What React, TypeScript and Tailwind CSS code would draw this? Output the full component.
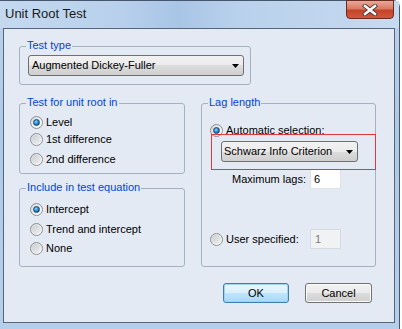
import React from "react";

function Radio({ checked }: { checked?: boolean }) {
  return (
    <div className="w-[13px] h-[13px] shrink-0 rounded-full border border-[#8e8f8f] bg-[linear-gradient(135deg,#d5d7da,#f6f6f6_70%,#ffffff)] flex items-center justify-center">
      {checked ? (
        <div className="w-[7px] h-[7px] rounded-full bg-[radial-gradient(circle_at_40%_35%,#8ad8ff,#1f7fc4_55%,#0b3b6a)] border border-[#174a78]" />
      ) : (
        <div className="w-[9px] h-[9px] rounded-full bg-[linear-gradient(135deg,#cbced2,#eef0f2)]" />
      )}
    </div>
  );
}

function GroupBox({
  label,
  className,
  children,
}: {
  label: string;
  className: string;
  children?: React.ReactNode;
}) {
  return (
    <div className={"relative border border-[#a5b1c2] rounded-[3px] " + className}>
      <span className="absolute left-[6px] top-[-8px] px-[1px] bg-[#e4eaf3] text-[#0046d5] text-[11px] leading-[13px]">
        {label}
      </span>
      {children}
    </div>
  );
}

function Combo({ text, className }: { text: string; className: string }) {
  return (
    <div
      className={
        "h-[21px] border border-[#707070] rounded-[3px] bg-[linear-gradient(#f2f2f2,#ebebeb_50%,#dddddd_50%,#cfcfcf)] flex items-center justify-between text-[11px] text-black " +
        className
      }
    >
      <span className="leading-[13px]">{text}</span>
      <svg width="7" height="4" viewBox="0 0 7 4" className="mr-[4px]">
        <path d="M0 0 H7 L3.5 4 Z" fill="#000" />
      </svg>
    </div>
  );
}

function RadioRow({
  checked,
  label,
  className,
}: {
  checked?: boolean;
  label: string;
  className: string;
}) {
  return (
    <div className={"h-[13px] flex items-center gap-[3px] " + className}>
      <Radio checked={checked} />
      <span className="text-[11px] leading-[13px] text-black">{label}</span>
    </div>
  );
}

export default function App() {
  return (
    <div
      className="w-[402px] h-[329px] overflow-hidden bg-white"
      style={{ fontFamily: '"Liberation Sans", Arial, sans-serif' }}
    >
      <div className="relative w-[400px] h-[329px] rounded-tr-[7px] border-r border-t border-[#46566c] bg-[linear-gradient(180deg,#c9dcf1_0%,#b7cfea_10%,#aecae9_40%,#b5cfeb_100%)] flex flex-col">
        {/* title bar */}
        <div className="h-[27px] flex items-start justify-between bg-[linear-gradient(90deg,#c4d9f0_0%,#b8d0ec_30%,#a9c5e6_45%,#b9d1ec_60%,#c6daf0_100%)]">
          <span className="pl-[5px] pt-[5px] text-[13px] leading-[16px] text-[#1b1b1b]">
            Unit Root Test
          </span>
          <div className="mr-[5px] mt-[-1px] w-[48px] h-[19px] rounded-b-[4px] border border-[#6a2b22] bg-[linear-gradient(#e9a99a,#d97a64_45%,#c7432a_55%,#d0583c)] flex items-center justify-center">
            <svg width="16" height="12" viewBox="0 0 16 12">
              <path d="M3 2 L13 10 M13 2 L3 10" stroke="#4a3a3a" strokeWidth="4.2" strokeLinecap="square" />
              <path d="M3 2 L13 10 M13 2 L3 10" stroke="#ffffff" strokeWidth="2.4" strokeLinecap="square" />
            </svg>
          </div>
        </div>
        {/* client area */}
        <div className="ml-[3px] w-[392px] h-[295px] border border-[#56657a] bg-[#e4eaf3] pl-[15px] pt-[17px] flex flex-col">
          <GroupBox label="Test type" className="w-[232px] h-[39px] pl-[8px] pt-[8px]">
            <Combo text="Augmented Dickey-Fuller" className="w-[216px] pl-[3px]" />
          </GroupBox>
          <div className="mt-[18px] flex">
            <div className="w-[166px] flex flex-col">
              <GroupBox label="Test for unit root in" className="h-[71px] pl-[10px] flex flex-col">
                <RadioRow checked label="Level" className="mt-[12px]" />
                <RadioRow label="1st difference" className="mt-[4px]" />
                <RadioRow label="2nd difference" className="mt-[7px]" />
              </GroupBox>
              <GroupBox label="Include in test equation" className="mt-[14px] h-[79px] pl-[10px] flex flex-col">
                <RadioRow checked label="Intercept" className="mt-[14px]" />
                <RadioRow label="Trend and intercept" className="mt-[7px]" />
                <RadioRow label="None" className="mt-[6px]" />
              </GroupBox>
            </div>
            <GroupBox label="Lag length" className="ml-[16px] w-[175px] h-[164px] flex flex-col">
              <RadioRow checked label="Automatic selection:" className="mt-[20px] ml-[8px]" />
              <Combo text="Schwarz Info Criterion" className="mt-[4px] ml-[19px] w-[137px] pl-[2px]" />
              <div className="mt-[7px] ml-[30px] h-[20px] flex items-center">
                <span className="w-[78px] text-[11px] leading-[13px] text-black">Maximum lags:</span>
                <div className="w-[31px] h-[20px] bg-white border border-[#dfe3e8] border-t-[#abadb3] flex items-center pl-[3px] text-[11px] text-black">
                  6
                </div>
              </div>
              <div className="mt-[40px] ml-[8px] h-[20px] flex items-center">
                <Radio />
                <span className="ml-[3px] w-[84px] text-[11px] leading-[13px] text-black">User specified:</span>
                <div className="w-[31px] h-[20px] bg-[#f1f2f4] border border-[#d6dbe2] flex items-center pl-[4px] text-[11px] text-[#7a7a7a]">
                  1
                </div>
              </div>
              <div className="absolute left-[9px] top-[30px] w-[165px] h-[36px] border border-[#e2383c]" />
            </GroupBox>
          </div>
          <div className="mt-[16px] pr-[22px] flex justify-end gap-[16px]">
            <div className="w-[66px] h-[20px] rounded-[3px] border border-[#3c7fb1] bg-[linear-gradient(#eaf6fd,#d9f0fc_50%,#bee6fd_50%,#a7d9f5)] shadow-[inset_0_0_0_1px_#9ad6f4] flex items-center justify-center text-[11px] text-black">
              OK
            </div>
            <div className="w-[67px] h-[20px] rounded-[3px] border border-[#707070] bg-[linear-gradient(#f2f2f2,#ebebeb_50%,#dddddd_50%,#cfcfcf)] shadow-[inset_0_0_0_1px_#fbfbfb] flex items-center justify-center text-[11px] text-black">
              Cancel
            </div>
          </div>
        </div>
      </div>
    </div>
  );
}
